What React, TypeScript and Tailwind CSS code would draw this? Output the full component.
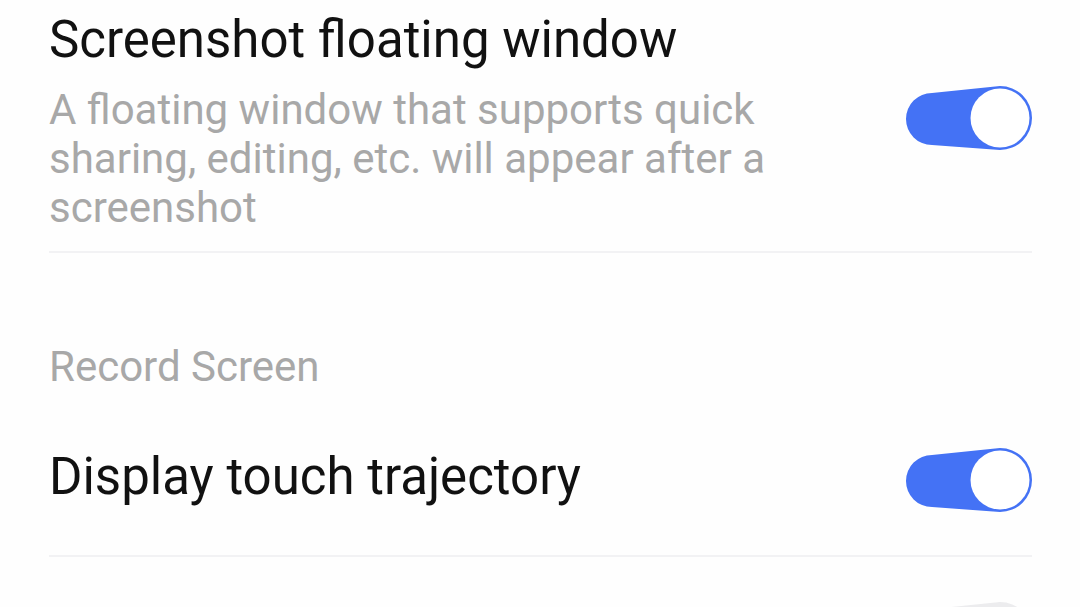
import React from 'react';

function Toggle({ on = true }: { on?: boolean }) {
    if (!on) {
        return (
            <svg width="130" height="70" viewBox="0 0 130 70" className="shrink-0">
                <path
                    d="M 28 8 L 96 1 A 32 32 0 0 1 96 65 L 28 60 A 26 26 0 0 1 28 8 Z"
                    fill="#ececee"
                />
                <circle cx="44" cy="34" r="27" fill="#ffffff" stroke="#e2e2e6" strokeWidth="2" />
            </svg>
        );
    }
    return (
        <svg width="130" height="70" viewBox="0 0 130 70" className="shrink-0">
            <path
                d="M 28 8 L 96 1 A 32 32 0 0 1 96 65 L 28 60 A 26 26 0 0 1 28 8 Z"
                fill="#4472f5"
            />
            <circle cx="96" cy="33" r="29.5" fill="#ffffff" />
        </svg>
    );
}

export default function App() {
    return (
        <div
            className="h-[607px] w-[1080px] overflow-hidden bg-[#fefefe]"
            style={{ fontFamily: 'Roboto, "Noto Sans", sans-serif' }}
        >
            <div className="pl-[49px] pr-[48px]">
                <div className="flex items-start justify-between border-b-2 border-[#f2f2f4] pt-[12px] pb-[19px]">
                    <div className="w-[740px]">
                        <p className="text-[51px] leading-[56px] text-[#111111]">
                            Screenshot floating window
                        </p>
                        <p className="mt-[17px] text-[42px] leading-[49px] text-[#a8a8a8]">
                            A floating window that supports quick sharing,
                            editing, etc. will appear after a screenshot
                        </p>
                    </div>
                    <div className="mt-[73px] -mr-[2px]">
                        <Toggle />
                    </div>
                </div>

                <p className="pt-[89px] text-[42px] leading-[49px] text-[#a8a8a8]">
                    Record Screen
                </p>

                <div className="flex items-start justify-between border-b-2 border-[#f2f2f4] pt-[58px] pb-[38px]">
                    <p className="text-[51px] leading-[56px] text-[#111111]">
                        Display touch trajectory
                    </p>
                    <div className="-mt-[2px] -mr-[2px]">
                        <Toggle />
                    </div>
                </div>

                <div className="flex items-start justify-between pt-[44px]">
                    <p className="text-[51px] leading-[56px] text-[#111111]">&nbsp;</p>
                    <div className="-mr-[2px]">
                        <Toggle on={false} />
                    </div>
                </div>
            </div>
        </div>
    );
}
